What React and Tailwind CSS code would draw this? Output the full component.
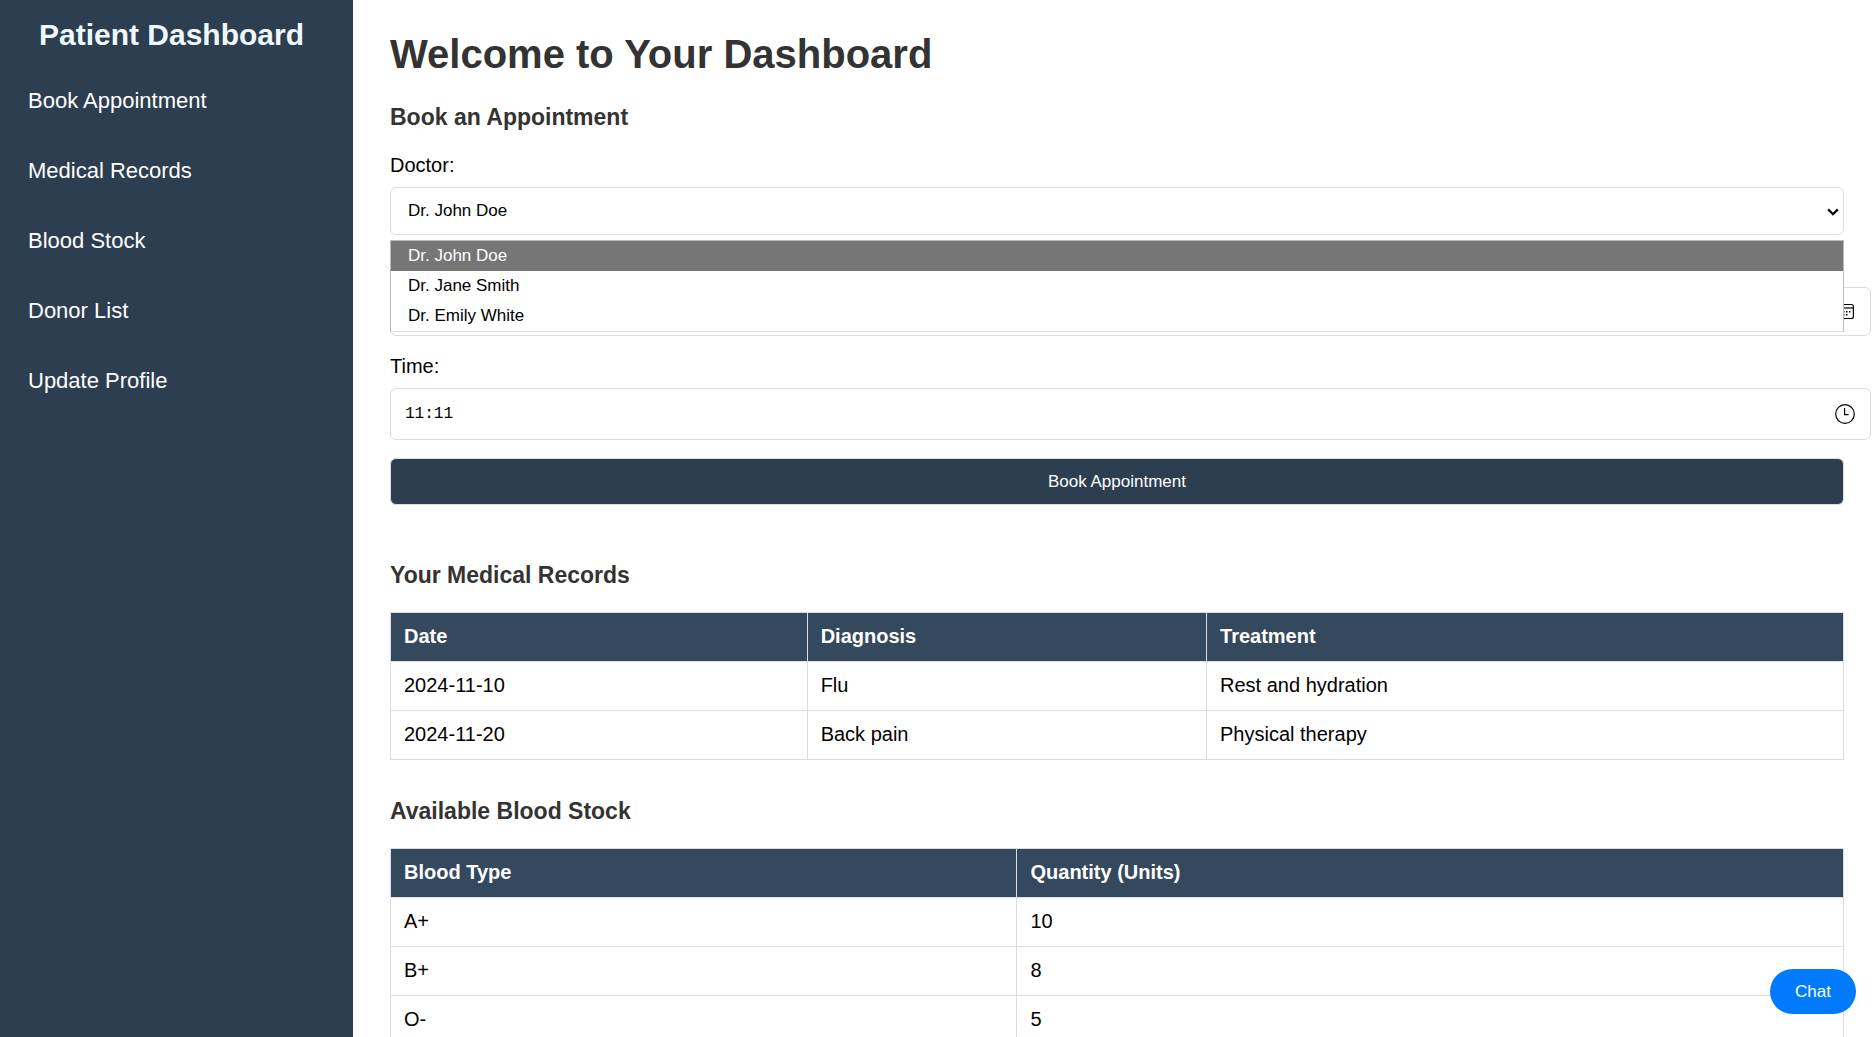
import React, { useState } from "react";

const navItems = ["Book Appointment", "Medical Records", "Blood Stock", "Donor List", "Update Profile"];
const doctors = ["Dr. John Doe", "Dr. Jane Smith", "Dr. Emily White"];

function Sidebar() {
  return (
    <aside className="w-[353px] shrink-0 bg-[#2c3e50] pr-[38px] pl-7">
      <h2 className="pt-[17px] text-center text-[30px] leading-9 font-bold text-[#f0f8ff]">Patient Dashboard</h2>
      <nav className="mt-[35px]">
        <ul className="flex flex-col gap-11">
          {navItems.map((item) => (
            <li key={item}>
              <a href="#" className="block text-[22px] leading-[26px] text-white">{item}</a>
            </li>
          ))}
        </ul>
      </nav>
    </aside>
  );
}

function SectionTitle({ children }) {
  return <h3 className="text-[23px] leading-7 font-bold text-[#333]">{children}</h3>;
}

function DoctorField() {
  const [doctor, setDoctor] = useState(doctors[0]);
  return (
    <div className="relative mt-2.5">
      <select
        id="doctor"
        value={doctor}
        onChange={(e) => setDoctor(e.target.value)}
        className="block h-12 w-full appearance-none rounded-md border border-[#ddd] bg-white px-[17px] text-[17px] text-black"
      >
        {doctors.map((name) => (
          <option key={name}>{name}</option>
        ))}
      </select>
      <svg className="pointer-events-none absolute top-[21px] right-[5px] h-2 w-3" viewBox="0 0 12 8" fill="none" stroke="#000" strokeWidth="2.2" aria-hidden="true">
        <path d="M1.2 1.4 6 6.2 10.8 1.4" />
      </svg>
      <ul role="listbox" aria-label="Doctor" className="absolute top-full z-10 mt-[5px] w-full border border-[#bbb] border-b-[#ddd] bg-white text-[17px] leading-[30px]">
        {doctors.map((name) => (
          <li
            key={name}
            role="option"
            aria-selected={name === doctor}
            onClick={() => setDoctor(name)}
            className="px-[17px] text-black aria-selected:bg-[#767676] aria-selected:text-white"
          >
            {name}
          </li>
        ))}
      </ul>
    </div>
  );
}

function CalendarIcon() {
  return (
    <svg className="h-5 w-5" viewBox="0 0 20 20" fill="none" stroke="#000" strokeWidth="1.2" aria-hidden="true">
      <rect x="1.6" y="2.5" width="16.8" height="14" rx="2" />
      <path d="M1.6 6h16.8" />
      <path d="M5 9.7h1.5M8 9.7h1.5M11 9.7h1.5M14 9.7h1.5M5 12.7h1.5M8 12.7h1.5M11 12.7h1.5" strokeWidth="1.5" />
    </svg>
  );
}

function ClockIcon() {
  return (
    <svg className="h-5 w-5" viewBox="0 0 20 20" fill="none" stroke="#000" strokeWidth="1.2" aria-hidden="true">
      <circle cx="10" cy="10" r="9.3" />
      <path d="M9.6 4v6.6h4" />
    </svg>
  );
}

function PickerField({ id, label, value, icon, className }) {
  return (
    <div className={className}>
      <input id={id} type="text" aria-label={label} defaultValue={value} className="min-w-0 flex-1 bg-transparent font-['Liberation_Mono',monospace] text-base text-black outline-none" />
      <button type="button" aria-label={`Pick ${label.toLowerCase()}`}>{icon}</button>
    </div>
  );
}

function DataTable({ columns, rows }) {
  return (
    <table className="mt-[23px] w-full border-collapse text-left text-[20px] leading-6">
      <thead className="bg-[#34495e] text-white">
        <tr>
          {columns.map((c) => (
            <th key={c} scope="col" className="border border-[#ddd] pt-[11px] pr-3 pb-[13px] pl-[13px] font-bold">{c}</th>
          ))}
        </tr>
      </thead>
      <tbody>
        {rows.map((row) => (
          <tr key={row[0]}>
            {row.map((cell) => (
              <td key={cell} className="border border-[#ddd] pt-[11px] pr-3 pb-[13px] pl-[13px]">{cell}</td>
            ))}
          </tr>
        ))}
      </tbody>
    </table>
  );
}

export default function App() {
  return (
    <div className="flex h-screen overflow-hidden bg-white font-['Liberation_Sans',Arial,sans-serif] text-black">
      <Sidebar />
      <main className="min-w-0 flex-1 overflow-hidden pt-8 pr-[31px] pl-[37px]">
        <h1 className="text-[40px] leading-11 font-bold text-[#333]">Welcome to Your Dashboard</h1>

        <section className="mt-[27px]">
          <SectionTitle>Book an Appointment</SectionTitle>
          <form className="mt-[22px] text-[20px] leading-6" onSubmit={(e) => e.preventDefault()}>
            <label htmlFor="doctor" className="block">Doctor:</label>
            <DoctorField />
            <PickerField id="date" label="Date" value="" icon={<CalendarIcon />} className="mt-[52px] -mr-[27px] flex h-[49px] items-center rounded-md border border-[#ddd] pr-[15px] pl-3.5" />
            <label htmlFor="time" className="mt-[18px] block">Time:</label>
            <PickerField id="time" label="Time" value="11:11" icon={<ClockIcon />} className="mt-2.5 -mr-[27px] flex h-[52px] items-center rounded-md border border-[#ddd] pr-[15px] pl-3.5" />
            <button type="submit" className="mt-[18px] block h-[47px] w-full rounded-md border border-[#ddd] bg-[#2c3e50] text-[17px] text-white">
              Book Appointment
            </button>
          </form>
        </section>

        <section className="mt-14">
          <SectionTitle>Your Medical Records</SectionTitle>
          <DataTable
            columns={["Date", "Diagnosis", "Treatment"]}
            rows={[
              ["2024-11-10", "Flu", "Rest and hydration"],
              ["2024-11-20", "Back pain", "Physical therapy"],
            ]}
          />
        </section>

        <section className="mt-[37px]">
          <SectionTitle>Available Blood Stock</SectionTitle>
          <DataTable
            columns={["Blood Type", "Quantity (Units)"]}
            rows={[
              ["A+", "10"],
              ["B+", "8"],
              ["O-", "5"],
            ]}
          />
        </section>
      </main>
      <button type="button" className="fixed right-[19px] bottom-[23px] rounded-full bg-[#007bff] px-[25px] py-[10px] text-[17px] leading-[25px] text-white">
        Chat
      </button>
    </div>
  );
}
